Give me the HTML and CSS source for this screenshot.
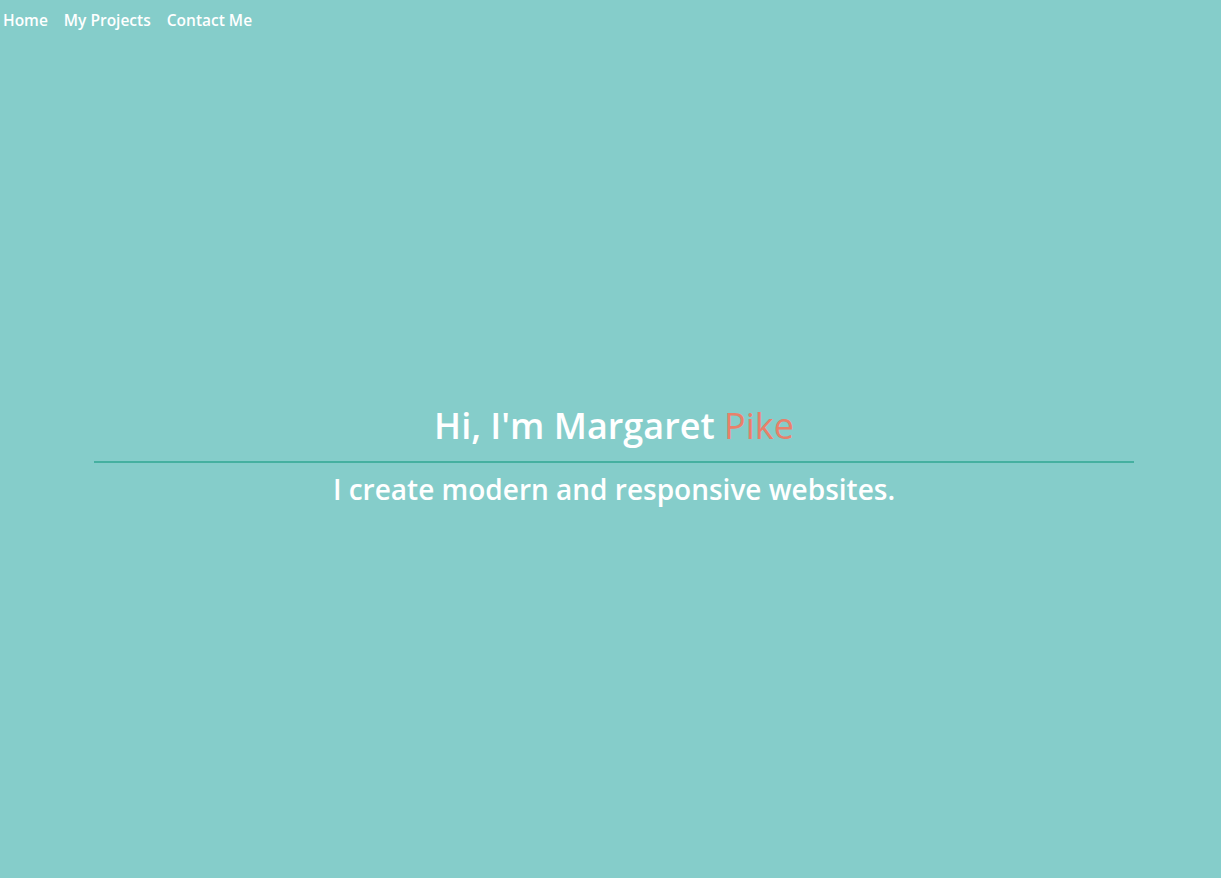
FILE: index.html
```html
<!DOCTYPE html>
<html lang="en">
<head>
<meta charset="utf-8">
<title>Margaret Pike</title>
<link rel="stylesheet" href="styles.css">
</head>
<body>
<nav class="nav">
  <a class="nav-link" href="#">Home</a>
  <a class="nav-link" href="#">My Projects</a>
  <a class="nav-link" href="#">Contact Me</a>
</nav>
<main class="hero">
  <h1 class="hero-title">Hi, I'm Margaret <span class="accent">Pike</span></h1>
  <hr class="hero-rule">
  <h2 class="hero-sub">I create modern and responsive websites.</h2>
</main>
</body>
</html>
```
FILE: styles.css
```css
html, body {
  margin: 0;
  height: 100%;
}
body {
  background: #85cdca;
  color: #ffffff;
  font-family: "Open Sans", "Noto Sans", sans-serif;
  display: flex;
  flex-direction: column;
}
.nav {
  display: flex;
  gap: 16px;
  padding: 8px 3px;
}
.nav-link {
  color: #ffffff;
  text-decoration: none;
  font-weight: 600;
  font-size: 15.5px;
  line-height: 24px;
}
.hero {
  flex: 1;
  display: flex;
  flex-direction: column;
  align-items: center;
  justify-content: center;
  text-align: center;
  padding-left: 7px;
  padding-bottom: 8px;
}
.hero-title {
  margin: 0;
  font-size: 36px;
  font-weight: 600;
  line-height: 46px;
}
.accent {
  color: #e8806a;
  font-weight: 400;
}
.hero-rule {
  width: 85.6%;
  border: 0;
  height: 2px;
  background: #45b0a0;
  margin: 12px 0 8px;
}
.hero-sub {
  margin: 0;
  font-size: 28px;
  font-weight: 600;
  line-height: 36px;
}
```
